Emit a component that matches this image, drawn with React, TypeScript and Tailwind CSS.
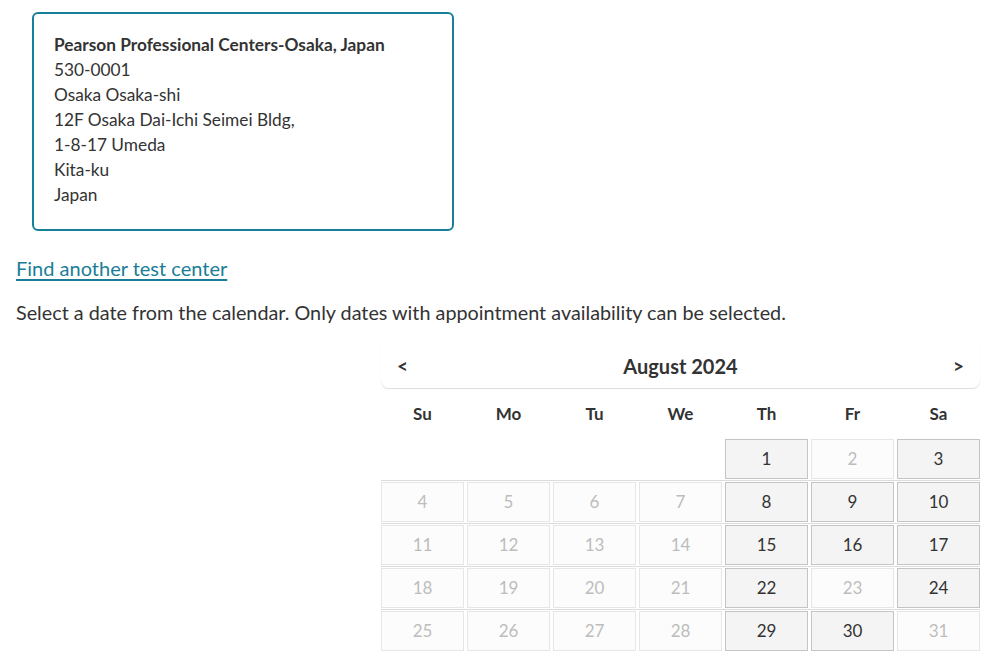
import React from "react";

type Cell = { d: number | null; on?: boolean };

const available = new Set([1, 3, 8, 9, 10, 15, 16, 17, 22, 24, 29, 30]);

function buildRows(): Cell[][] {
  const cells: Cell[] = [];
  for (let i = 0; i < 4; i++) cells.push({ d: null });
  for (let d = 1; d <= 31; d++) cells.push({ d, on: available.has(d) });
  const rows: Cell[][] = [];
  for (let i = 0; i < cells.length; i += 7) rows.push(cells.slice(i, i + 7));
  return rows;
}

const days = ["Su", "Mo", "Tu", "We", "Th", "Fr", "Sa"];

export default function App() {
  const rows = buildRows();
  return (
    <div
      className="w-[998px] h-[663px] bg-white text-[#333] overflow-hidden"
      style={{ fontFamily: "Lato, 'Open Sans', sans-serif" }}
    >
      <div className="pt-[12px] pl-[16px]">
        <div className="ml-[16px] w-[422px] border-2 border-[#167f99] rounded-[6px] pl-[20px] pt-[18px] pb-[22px] text-[17.3px] leading-[25px]">
          <div className="font-bold">Pearson Professional Centers-Osaka, Japan</div>
          <div>530-0001</div>
          <div>Osaka Osaka-shi</div>
          <div>12F Osaka Dai-Ichi Seimei Bldg,</div>
          <div>1-8-17 Umeda</div>
          <div>Kita-ku</div>
          <div>Japan</div>
        </div>
        <div className="mt-[24px] text-[20px] leading-[26px]">
          <a href="#" className="text-[#1a7d97] underline underline-offset-[3px]">
            Find another test center
          </a>
        </div>
        <div className="mt-[18px] text-[19.8px] leading-[26px]">
          Select a date from the calendar. Only dates with appointment availability can be selected.
        </div>
      </div>

      <div className="mt-[19px] ml-[381px] w-[599px]">
        <div className="h-[44px] flex items-center justify-between px-[16px] rounded-b-[8px] shadow-[0_1px_1px_rgba(0,0,0,0.14)]">
          <span className="font-bold text-[19px]">&lt;</span>
          <span className="font-bold text-[20px]">August 2024</span>
          <span className="font-bold text-[19px]">&gt;</span>
        </div>
        <div className="grid grid-cols-7 gap-[3px] h-[49px] items-center mt-[1px]">
          {days.map((d) => (
            <div key={d} className="text-center font-bold text-[17px]">
              {d}
            </div>
          ))}
        </div>
        {rows.map((row, ri) => (
          <div
            key={ri}
            className={`grid grid-cols-7 gap-[3px] py-[1px] ${ri > 0 ? "border-t border-[#dcdcdc]" : ""}`}
          >
            {row.map((c, ci) =>
              c.d === null ? (
                <div key={ci} className="h-[40px]" />
              ) : (
                <div
                  key={ci}
                  className={`h-[40px] flex items-center justify-center text-[17px] border ${
                    c.on
                      ? "bg-[#f4f4f4] border-[#c4c4c4] text-[#333]"
                      : "bg-[#fcfcfc] border-[#e6e6e6] text-[#bdbdbd]"
                  }`}
                >
                  {c.d}
                </div>
              )
            )}
          </div>
        ))}
      </div>
    </div>
  );
}
